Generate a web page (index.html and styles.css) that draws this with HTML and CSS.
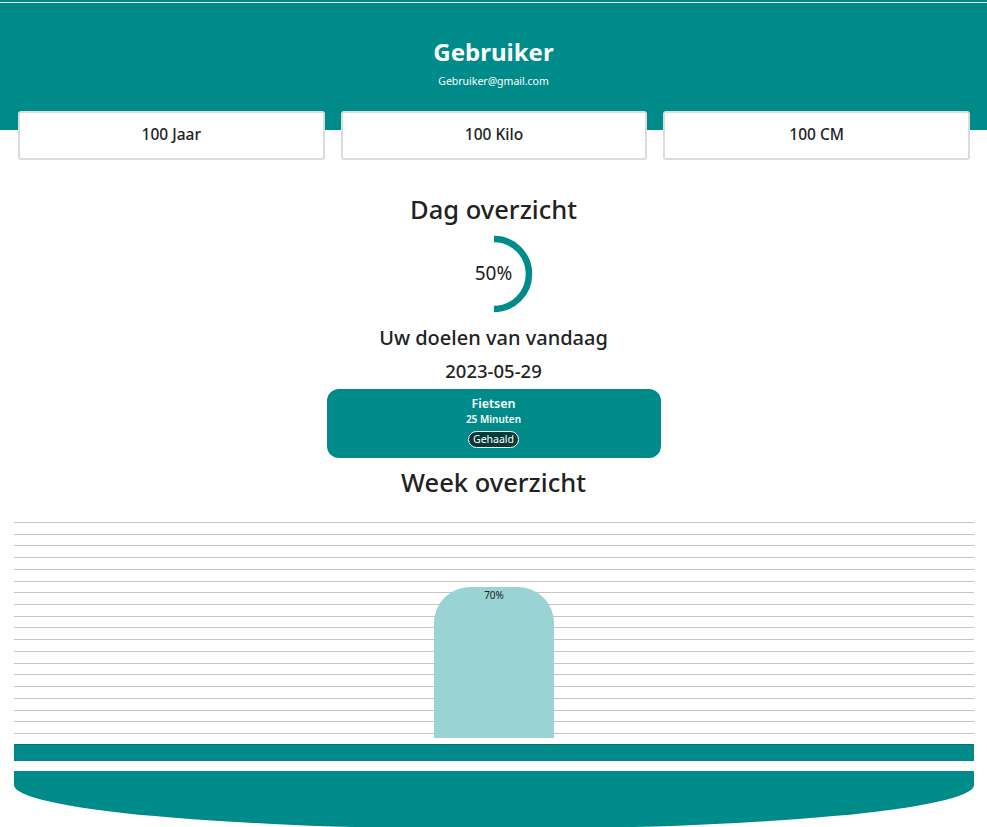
FILE: index.html
```html
<!DOCTYPE html>
<html lang="nl">
<head>
<meta charset="utf-8">
<title>Gebruiker</title>
<link rel="stylesheet" href="styles.css">
</head>
<body>
<header class="hero">
  <h1 class="hero-name">Gebruiker</h1>
  <p class="hero-mail">Gebruiker@gmail.com</p>
</header>
<section class="stats">
  <div class="stat">100 Jaar</div>
  <div class="stat">100 Kilo</div>
  <div class="stat">100 CM</div>
</section>
<main class="content">
  <h2 class="section-title day-title">Dag overzicht</h2>
  <div class="ring">
    <svg width="80" height="80" viewBox="0 0 80 80">
      <path d="M40 5 A35 35 0 0 1 40 75" fill="none" stroke="#008b8b" stroke-width="6.5"/>
    </svg>
    <span class="ring-label">50%</span>
  </div>
  <h3 class="goals-title">Uw doelen van vandaag</h3>
  <p class="goals-date">2023-05-29</p>
  <div class="goal">
    <div class="goal-name">Fietsen</div>
    <div class="goal-time">25 Minuten</div>
    <span class="goal-badge">Gehaald</span>
  </div>
  <h2 class="section-title week-title">Week overzicht</h2>
</main>
<section class="chart">
  <div class="grid">
    <i></i><i></i><i></i><i></i><i></i><i></i><i></i><i></i><i></i><i></i>
    <i></i><i></i><i></i><i></i><i></i><i></i><i></i><i></i><i></i>
  </div>
  <div class="bar" style="height:151px"><span>70%</span></div>
</section>
<div class="strip"></div>
<footer class="footer"></footer>
</body>
</html>
```
FILE: styles.css
```css
* { box-sizing: border-box; }
body {
  margin: 0;
  font-family: "Noto Sans", "Open Sans", sans-serif;
  color: #212529;
  background: #fff;
  overflow: hidden;
}
.hero {
  height: 130px;
  background: linear-gradient(to bottom, #008b8b 0 2px, #e6e6e6 2px 3px, #008b8b 3px);
  color: #fff;
  text-align: center;
  padding-top: 35px;
}
.hero-name {
  margin: 0;
  font-size: 24px;
  font-weight: 700;
  line-height: 34px;
}
.hero-mail {
  margin: 5px 0 0;
  font-size: 10.5px;
  line-height: 14px;
}
.stats {
  display: grid;
  grid-template-columns: repeat(3, 1fr);
  gap: 16px;
  padding: 0 17px 0 18px;
  margin-top: -19px;
}
.stat {
  height: 49px;
  padding-bottom: 3px;
  background: #fff;
  border: 2px solid #dcdcdc;
  border-radius: 3px;
  display: flex;
  align-items: center;
  justify-content: center;
  font-size: 15.5px;
  font-weight: 500;
  color: #222;
}
.content {
  display: flex;
  flex-direction: column;
  align-items: center;
}
.section-title {
  margin: 0;
  font-size: 25.5px;
  font-weight: 500;
  line-height: 30px;
  color: #222;
}
.day-title { margin-top: 34px; }
.ring {
  position: relative;
  width: 80px;
  height: 80px;
  margin-top: 10px;
}
.ring svg { display: block; }
.ring-label {
  position: absolute;
  inset: 0;
  padding-bottom: 3px;
  display: flex;
  align-items: center;
  justify-content: center;
  font-size: 19px;
  font-weight: 400;
  color: #222;
}
.goals-title {
  margin: 12px 0 0;
  font-size: 20px;
  font-weight: 500;
  line-height: 24px;
  color: #222;
}
.goals-date {
  margin: 10px 0 0;
  font-size: 18.5px;
  font-weight: 500;
  line-height: 22px;
  color: #222;
}
.goal {
  width: 334px;
  height: 69px;
  margin-top: 7px;
  background: #008b8b;
  border-radius: 12px;
  color: #fff;
  text-align: center;
  padding-top: 7px;
}
.goal-name {
  font-size: 12.5px;
  font-weight: 600;
  line-height: 16px;
}
.goal-time {
  font-size: 10px;
  font-weight: 600;
  line-height: 14px;
}
.goal-badge {
  display: inline-block;
  margin-top: 5px;
  padding: 0 4px;
  font-size: 10.5px;
  line-height: 15px;
  background: #063a3a;
  border: 1px solid #fff;
  border-radius: 9px;
}
.week-title { margin-top: 9px; }
.chart {
  position: relative;
  margin: 25px 13px 0 14px;
  height: 216px;
}
.grid {
  height: 212px;
  display: flex;
  flex-direction: column;
  justify-content: space-between;
}
.grid i {
  display: block;
  height: 1px;
  background: #c4c4c4;
}
.bar {
  position: absolute;
  left: 420px;
  bottom: 0;
  width: 120px;
  background: #99d3d3;
  border-radius: 36px 36px 0 0;
  text-align: center;
}
.bar span {
  display: block;
  font-size: 10px;
  line-height: 14px;
  padding-top: 1px;
  color: #222;
}
.strip {
  margin: 6px 13px 0 14px;
  height: 17px;
  background: #008b8b;
  border-top: 1px solid #007373;
}
.footer {
  margin: 10px 13px 0 14px;
  height: 58px;
  background: #008b8b;
  border-radius: 0 0 50% 50% / 0 0 44px 44px;
}
```
